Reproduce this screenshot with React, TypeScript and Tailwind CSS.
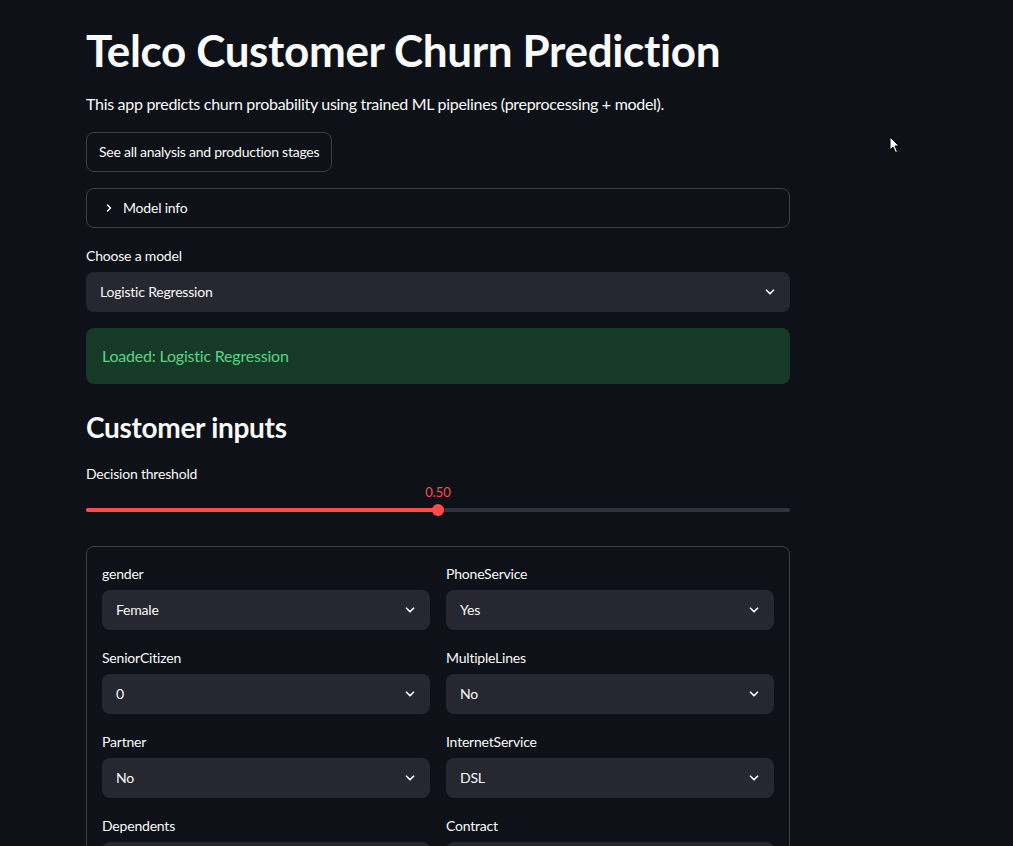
import React from 'react';
import { ChevronDown, ChevronRight } from 'lucide-react';

const fields = [
  ['gender', 'Female', 'PhoneService', 'Yes'],
  ['SeniorCitizen', '0', 'MultipleLines', 'No'],
  ['Partner', 'No', 'InternetService', 'DSL'],
  ['Dependents', 'No', 'Contract', 'Month-to-month'],
  ['tenure', '12', 'PaperlessBilling', 'Yes'],
];

const Select = ({ value }: { value: string }) => (
  <div className="h-10 w-full rounded-lg bg-[#262730] flex items-center justify-between pl-[14px] pr-[13px] text-sm text-[#fafafa] tracking-[-0.2px]">
    <span>{value}</span>
    <ChevronDown className="h-[14px] w-[14px] text-[#fafafa]" strokeWidth={3} />
  </div>
);

const Field = ({ label, value }: { label: string; value: string }) => (
  <div className="flex flex-col">
    <label className="text-sm text-[#fafafa] h-5 mb-[6px] leading-5 tracking-[-0.2px]">{label}</label>
    <Select value={value} />
  </div>
);

export default function App() {
  return (
    <div
      className="min-h-screen w-full bg-[#0e1117] text-[#fafafa] relative overflow-hidden"
      style={{ fontFamily: 'Lato, "Noto Sans", sans-serif' }}
    >
      <div className="w-[704px] ml-[86px] pt-[24px] h-[846px]">
        <h1 className="text-[44px] font-bold leading-[52px] tracking-[-0.35px]">Telco Customer Churn Prediction</h1>
        <p className="text-base mt-[16px] leading-6 tracking-[-0.3px]">
          This app predicts churn probability using trained ML pipelines (preprocessing + model).
        </p>

        <button className="mt-[16px] h-10 px-3 rounded-lg border border-[#3d4047] text-sm text-[#fafafa] bg-[#0e1117] tracking-[-0.25px]">
          See all analysis and production stages
        </button>

        <div className="mt-[16px] h-10 rounded-lg border border-[#3d4047] flex items-center px-4 text-sm tracking-[-0.2px]">
          <ChevronRight className="h-3 w-3 mr-2" strokeWidth={3} />
          <span>Model info</span>
        </div>

        <div className="mt-[18px] text-sm leading-5 h-5 mb-[6px] tracking-[-0.2px]">Choose a model</div>
        <Select value="Logistic Regression" />

        <div className="mt-[16px] h-[56px] rounded-lg bg-[#173928] flex items-center px-4 text-base text-[#55d685] tracking-[-0.2px]">
          Loaded: Logistic Regression
        </div>

        <h2 className="mt-[25px] text-[28px] font-bold leading-9 tracking-[-0.3px]">Customer inputs</h2>

        <div className="mt-[19px] text-sm leading-5 tracking-[-0.2px]">Decision threshold</div>
        <div className="relative h-[44px]">
          <div className="absolute left-[352px] -translate-x-1/2 -top-[1px] text-[13px] text-[#ff4b4b]">0.50</div>
          <div className="absolute left-0 right-0 top-[24px] h-1 rounded-full bg-[#31333c]" />
          <div className="absolute left-0 w-[352px] top-[24px] h-1 rounded-full bg-[#ff4b4b]" />
          <div className="absolute left-[346px] top-[20px] h-3 w-3 rounded-full bg-[#ff4b4b]" />
        </div>

        <div className="mt-[18px] rounded-lg border border-[#3d4047] px-[15px] pt-[17px] pb-4">
          <div className="grid grid-cols-2 gap-x-4 gap-y-[18px]">
            {fields.map((r, i) => (
              <React.Fragment key={i}>
                <Field label={r[0]} value={r[1]} />
                <Field label={r[2]} value={r[3]} />
              </React.Fragment>
            ))}
          </div>
        </div>
      </div>

      <svg className="absolute left-[889px] top-[136px]" width="12" height="18" viewBox="0 0 12 18">
        <path d="M1 1 L1 14 L4 11 L6.5 16.5 L8.5 15.5 L6 10 L10 10 Z" fill="#fff" stroke="#000" strokeWidth="1" />
      </svg>
    </div>
  );
}
